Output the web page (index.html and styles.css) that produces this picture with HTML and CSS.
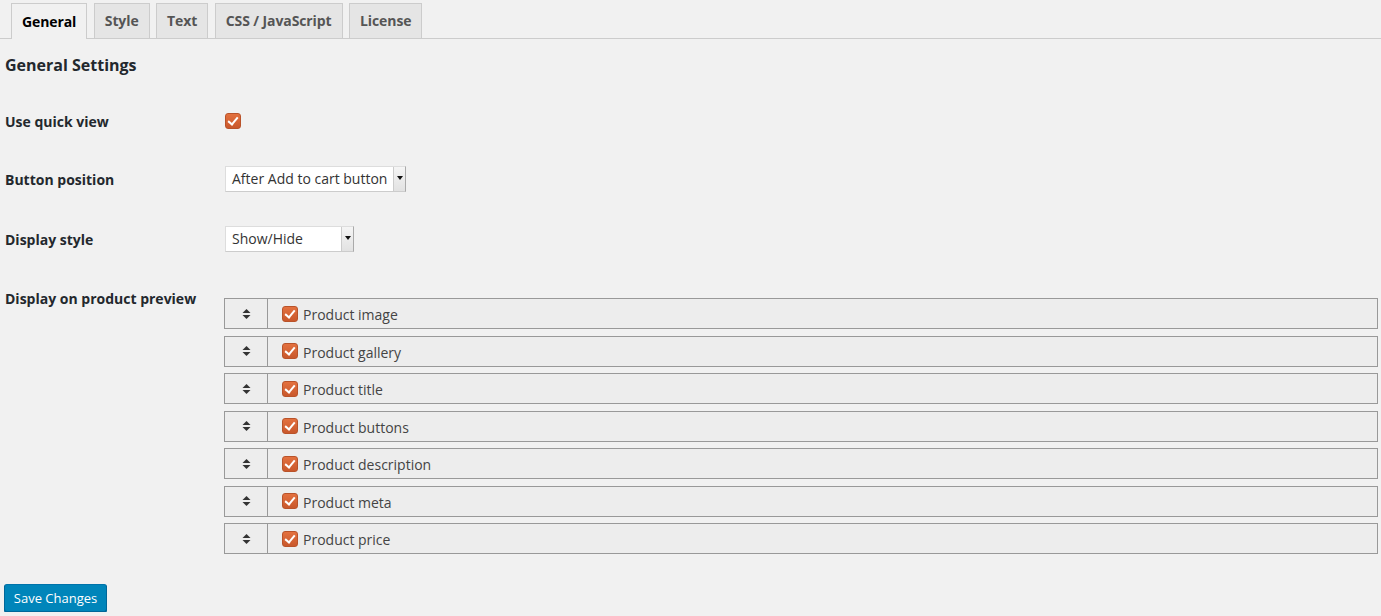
FILE: index.html
```html
<!DOCTYPE html>
<html>
<head>
<meta charset="utf-8">
<link rel="stylesheet" href="styles.css">
</head>
<body>
<nav class="tabs">
  <a class="tab active">General</a>
  <a class="tab">Style</a>
  <a class="tab">Text</a>
  <a class="tab">CSS / JavaScript</a>
  <a class="tab">License</a>
</nav>
<main class="content">
  <h2 class="title">General Settings</h2>
  <div class="row row-1">
    <div class="label">Use quick view</div>
    <div class="field"><span class="check"></span></div>
  </div>
  <div class="row row-2">
    <div class="label">Button position</div>
    <div class="field"><span class="select select-wide"><span class="select-text">After Add to cart button</span><span class="select-arrow"></span></span></div>
  </div>
  <div class="row row-3">
    <div class="label">Display style</div>
    <div class="field"><span class="select select-narrow"><span class="select-text">Show/Hide</span><span class="select-arrow"></span></span></div>
  </div>
  <div class="row row-list">
    <div class="label label-top">Display on product preview</div>
    <ul class="sortable">
      <li class="item"><span class="handle"><svg width="9" height="10" viewBox="0 0 9 10"><path d="M4.5 0 L8.5 4 L0.5 4 Z M0.5 6 L8.5 6 L4.5 10 Z" fill="#333"/></svg></span><span class="item-body"><span class="check"></span>Product image</span></li>
      <li class="item"><span class="handle"><svg width="9" height="10" viewBox="0 0 9 10"><path d="M4.5 0 L8.5 4 L0.5 4 Z M0.5 6 L8.5 6 L4.5 10 Z" fill="#333"/></svg></span><span class="item-body"><span class="check"></span>Product gallery</span></li>
      <li class="item"><span class="handle"><svg width="9" height="10" viewBox="0 0 9 10"><path d="M4.5 0 L8.5 4 L0.5 4 Z M0.5 6 L8.5 6 L4.5 10 Z" fill="#333"/></svg></span><span class="item-body"><span class="check"></span>Product title</span></li>
      <li class="item"><span class="handle"><svg width="9" height="10" viewBox="0 0 9 10"><path d="M4.5 0 L8.5 4 L0.5 4 Z M0.5 6 L8.5 6 L4.5 10 Z" fill="#333"/></svg></span><span class="item-body"><span class="check"></span>Product buttons</span></li>
      <li class="item"><span class="handle"><svg width="9" height="10" viewBox="0 0 9 10"><path d="M4.5 0 L8.5 4 L0.5 4 Z M0.5 6 L8.5 6 L4.5 10 Z" fill="#333"/></svg></span><span class="item-body"><span class="check"></span>Product description</span></li>
      <li class="item"><span class="handle"><svg width="9" height="10" viewBox="0 0 9 10"><path d="M4.5 0 L8.5 4 L0.5 4 Z M0.5 6 L8.5 6 L4.5 10 Z" fill="#333"/></svg></span><span class="item-body"><span class="check"></span>Product meta</span></li>
      <li class="item"><span class="handle"><svg width="9" height="10" viewBox="0 0 9 10"><path d="M4.5 0 L8.5 4 L0.5 4 Z M0.5 6 L8.5 6 L4.5 10 Z" fill="#333"/></svg></span><span class="item-body"><span class="check"></span>Product price</span></li>
    </ul>
  </div>
  <div class="actions"><button class="save">Save Changes</button></div>
</main>
</body>
</html>
```

FILE: styles.css
```css
html, body {
  margin: 0;
  padding: 0;
  background: #f1f1f1;
}
body {
  font-family: "Open Sans", "Noto Sans", sans-serif;
  font-size: 14px;
  color: #23282d;
}
.tabs {
  display: flex;
  gap: 6.5px;
  padding: 3px 0 0 11px;
  border-bottom: 1px solid #ccc;
  height: 39px;
  box-sizing: border-box;
}
.tab {
  display: flex;
  align-items: center;
  height: 35px;
  box-sizing: border-box;
  padding: 0 10px 1px;
  border: 1px solid #ccc;
  border-bottom: none;
  background: #e5e5e5;
  color: #555;
  font-weight: 700;
  font-size: 14px;
  letter-spacing: -0.1px;
}
.tab.active {
  background: #f1f1f1;
  color: #000;
  height: 36px;
  margin-bottom: -1px;
}
.content {
  padding: 0 0 0 4px;
}
.title {
  margin: 15px 0 0 1px;
  font-size: 16px;
  line-height: 22px;
  font-weight: 700;
  color: #23282d;
}
.row {
  display: grid;
  grid-template-columns: 220px 1fr;
  align-items: center;
}
.row-1 { height: 58px; margin-top: 16px; }
.row-2 { height: 58px; }
.row-3 { height: 62px; }
.row-list {
  align-items: start;
  margin-top: 28px;
}
.label {
  font-weight: 700;
  font-size: 14px;
  color: #23282d;
  padding-left: 1px;
}
.label-top {
  margin-top: -9px;
}
.field {
  display: flex;
  align-items: center;
  padding-left: 1px;
}
.check {
  display: inline-block;
  width: 16px;
  height: 16px;
  box-sizing: border-box;
  border-radius: 3px;
  border: 1px solid #b9532a;
  background: linear-gradient(#e3713f, #c9582c);
  position: relative;
  flex: none;
}
.check::after {
  content: "";
  position: absolute;
  left: 4px;
  top: 1px;
  width: 4px;
  height: 8px;
  border: solid #fff;
  border-width: 0 2.5px 2.5px 0;
  transform: rotate(40deg);
}
.select {
  display: inline-flex;
  align-items: stretch;
  height: 26px;
  box-sizing: border-box;
  background: #fff;
  border: 1px solid #ddd;
  border-right-color: #aaa;
  border-bottom-color: #ccc;
}
.select-wide { width: 181px; }
.select-narrow { width: 129px; }
.select-text {
  flex: 1;
  padding-left: 6px;
  line-height: 24px;
  color: #333;
  font-size: 14px;
  white-space: nowrap;
  overflow: hidden;
}
.select-arrow {
  width: 11px;
  background: linear-gradient(#f5f5f5, #e2e2e2);
  border-left: 1px solid #ccc;
  position: relative;
}
.select-arrow::after {
  content: "";
  position: absolute;
  left: 3px;
  top: 9px;
  border-left: 3px solid transparent;
  border-right: 3px solid transparent;
  border-top: 4px solid #111;
}
.sortable {
  list-style: none;
  margin: 0 3px 0 0;
  padding: 0;
  display: flex;
  flex-direction: column;
  gap: 6.5px;
}
.item {
  display: flex;
  height: 31px;
  box-sizing: border-box;
  border: 1px solid #999;
  background: #ededed;
}
.handle {
  width: 42px;
  flex: none;
  border-right: 1px solid #999;
  display: flex;
  align-items: center;
  justify-content: center;
}
.item-body {
  display: flex;
  align-items: center;
  gap: 5px;
  padding-left: 14px;
  color: #444;
  font-size: 14px;
  padding-top: 2px;
}
.item-body .check { margin-top: -2px; }
.actions {
  margin-top: 30px;
}
.save {
  font-family: inherit;
  font-size: 13px;
  color: #fff;
  background: #0085ba;
  border: 1px solid #0073aa;
  border-color: #0073aa #006799 #006799;
  box-shadow: 0 1px 0 #006799;
  border-radius: 3px;
  height: 28px;
  width: 103px;
  padding: 0;
}
```
